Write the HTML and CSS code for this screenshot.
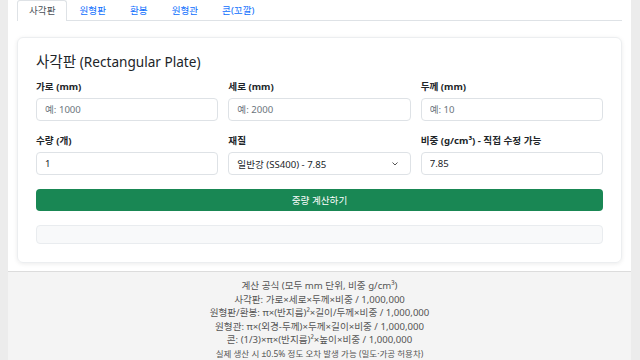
FILE: index.html
```html
<!DOCTYPE html>
<html lang="ko">
<head>
<meta charset="utf-8">
<link rel="stylesheet" href="styles.css">
</head>
<body>
<div class="page">
  <ul class="tabs">
    <li class="tab active">사각판</li>
    <li class="tab">원형판</li>
    <li class="tab">환봉</li>
    <li class="tab">원형관</li>
    <li class="tab">콘(꼬깔)</li>
  </ul>
  <div class="card">
    <h2 class="title">사각판 <span class="en">(Rectangular Plate)</span></h2>
    <div class="grid">
      <div class="field">
        <label class="label">가로 (mm)</label>
        <input class="input" placeholder="예: 1000">
      </div>
      <div class="field">
        <label class="label">세로 (mm)</label>
        <input class="input" placeholder="예: 2000">
      </div>
      <div class="field">
        <label class="label">두께 (mm)</label>
        <input class="input" placeholder="예: 10">
      </div>
      <div class="field">
        <label class="label">수량 (개)</label>
        <input class="input" value="1">
      </div>
      <div class="field">
        <label class="label">재질</label>
        <div class="select">
          <span>일반강 (SS400) - 7.85</span>
          <svg class="chev" width="8" height="6" viewBox="0 0 8 6"><path d="M1.5 1.5 L4 4 L6.5 1.5" fill="none" stroke="#555" stroke-width="1"/></svg>
        </div>
      </div>
      <div class="field">
        <label class="label">비중 (g/cm³) - 직접 수정 가능</label>
        <input class="input" value="7.85">
      </div>
    </div>
    <button class="btn">중량 계산하기</button>
    <div class="result"></div>
  </div>
  <div class="footer">
    <p>계산 공식 (모두 mm 단위, 비중 g/cm³)</p>
    <p>사각판: 가로×세로×두께×비중 / 1,000,000</p>
    <p>원형판/환봉: π×(반지름)²×길이/두께×비중 / 1,000,000</p>
    <p>원형관: π×(외경-두께)×두께×길이×비중 / 1,000,000</p>
    <p>콘: (1/3)×π×(반지름)²×높이×비중 / 1,000,000</p>
    <p class="small">실제 생산 시 ±0.5% 정도 오차 발생 가능 (밀도·가공 허용차)</p>
  </div>
</div>
</body>
</html>
```

FILE: styles.css
```css
* { box-sizing: border-box; }
html, body { margin: 0; padding: 0; }
body {
  background: #ececec;
  font-family: "Noto Sans", "Noto Sans CJK KR", sans-serif;
  color: #212529;
}
.page {
  margin: 0 9px 0 8px;
  background: #fff;
  min-height: 360px;
  display: flex;
  flex-direction: column;
}
.tabs {
  list-style: none;
  margin: 0 9px;
  padding: 0;
  display: flex;
  border-bottom: 1px solid #dee2e6;
  height: 21px;
}
.tab {
  font-size: 9.6px;
  line-height: 20px;
  padding: 0 11px;
  color: #0d6efd;
  border: 1px solid transparent;
  border-bottom: none;
  border-radius: 3px 3px 0 0;
}
.tab.active {
  color: #495057;
  background: #fff;
  border-color: #dee2e6;
  height: 21px;
}
.card {
  margin: 16px 9px 8px;
  padding: 14px 18px 18px;
  border: 1px solid #eceef0;
  border-radius: 6px;
  box-shadow: 0 1px 4px rgba(0,0,0,0.08);
}
.title {
  margin: 0 0 10px;
  font-size: 14.5px;
  font-weight: 400;
  line-height: 18px;
  color: #212529;
}
.title .en { font-size: 13.6px; }
.grid {
  display: grid;
  grid-template-columns: repeat(3, 1fr);
  column-gap: 10px;
  row-gap: 14px;
}
.field { display: flex; flex-direction: column; }
.label {
  font-size: 9.6px;
  font-weight: 700;
  line-height: 12px;
  margin-bottom: 5px;
  color: #212529;
}
.input, .select {
  height: 23px;
  border: 1px solid #dee2e6;
  border-radius: 4px;
  padding: 0 8px;
  font-family: inherit;
  font-size: 9.6px;
  color: #212529;
  background: #fff;
  outline: none;
}
.input::placeholder { color: #6c757d; opacity: 1; }
.select {
  display: flex;
  align-items: center;
  justify-content: space-between;
}
.chev { margin-right: 3px; }
.btn {
  display: block;
  width: 100%;
  margin-top: 14px;
  height: 22px;
  background: #198754;
  color: #fff;
  border: none;
  border-radius: 4px;
  font-family: inherit;
  font-size: 9.6px;
}
.result {
  margin-top: 14px;
  height: 19px;
  background: #f8f9fa;
  border: 1px solid #e9ecef;
  border-radius: 4px;
}
.footer {
  flex: 1;
  border-top: 1px solid #dcdcdc;
  background: #f4f4f4;
  padding-top: 7px;
  text-align: center;
  color: #555;
  font-size: 9.6px;
}
.footer p { margin: 0; line-height: 13.6px; }
.footer p.small { font-size: 8.5px; }
```
